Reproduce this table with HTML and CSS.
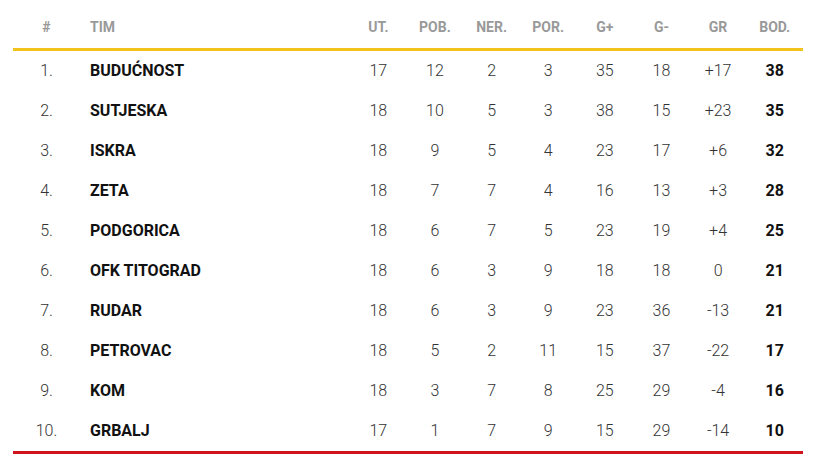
FILE: index.html
```html
<!DOCTYPE html>
<html>
<head>
<meta charset="utf-8">
<link rel="stylesheet" href="styles.css">
</head>
<body>
<div class="table">
  <div class="row head">
    <div class="c pos">#</div><div class="c team">TIM</div>
    <div class="c">UT.</div><div class="c">POB.</div><div class="c">NER.</div><div class="c">POR.</div>
    <div class="c">G+</div><div class="c">G-</div><div class="c">GR</div><div class="c">BOD.</div>
  </div>
  <div class="body">
    <div class="row"><div class="c pos">1.</div><div class="c team">BUDUĆNOST</div><div class="c">17</div><div class="c">12</div><div class="c">2</div><div class="c">3</div><div class="c">35</div><div class="c">18</div><div class="c">+17</div><div class="c pts">38</div></div>
    <div class="row"><div class="c pos">2.</div><div class="c team">SUTJESKA</div><div class="c">18</div><div class="c">10</div><div class="c">5</div><div class="c">3</div><div class="c">38</div><div class="c">15</div><div class="c">+23</div><div class="c pts">35</div></div>
    <div class="row"><div class="c pos">3.</div><div class="c team">ISKRA</div><div class="c">18</div><div class="c">9</div><div class="c">5</div><div class="c">4</div><div class="c">23</div><div class="c">17</div><div class="c">+6</div><div class="c pts">32</div></div>
    <div class="row"><div class="c pos">4.</div><div class="c team">ZETA</div><div class="c">18</div><div class="c">7</div><div class="c">7</div><div class="c">4</div><div class="c">16</div><div class="c">13</div><div class="c">+3</div><div class="c pts">28</div></div>
    <div class="row"><div class="c pos">5.</div><div class="c team">PODGORICA</div><div class="c">18</div><div class="c">6</div><div class="c">7</div><div class="c">5</div><div class="c">23</div><div class="c">19</div><div class="c">+4</div><div class="c pts">25</div></div>
    <div class="row"><div class="c pos">6.</div><div class="c team">OFK TITOGRAD</div><div class="c">18</div><div class="c">6</div><div class="c">3</div><div class="c">9</div><div class="c">18</div><div class="c">18</div><div class="c">0</div><div class="c pts">21</div></div>
    <div class="row"><div class="c pos">7.</div><div class="c team">RUDAR</div><div class="c">18</div><div class="c">6</div><div class="c">3</div><div class="c">9</div><div class="c">23</div><div class="c">36</div><div class="c">-13</div><div class="c pts">21</div></div>
    <div class="row"><div class="c pos">8.</div><div class="c team">PETROVAC</div><div class="c">18</div><div class="c">5</div><div class="c">2</div><div class="c">11</div><div class="c">15</div><div class="c">37</div><div class="c">-22</div><div class="c pts">17</div></div>
    <div class="row"><div class="c pos">9.</div><div class="c team">KOM</div><div class="c">18</div><div class="c">3</div><div class="c">7</div><div class="c">8</div><div class="c">25</div><div class="c">29</div><div class="c">-4</div><div class="c pts">16</div></div>
    <div class="row"><div class="c pos">10.</div><div class="c team">GRBALJ</div><div class="c">17</div><div class="c">1</div><div class="c">7</div><div class="c">9</div><div class="c">15</div><div class="c">29</div><div class="c">-14</div><div class="c pts">10</div></div>
  </div>
</div>
</body>
</html>
```
FILE: styles.css
```css
html, body {
  margin: 0;
  padding: 0;
  background: #fff;
}
body {
  font-family: Roboto, "Liberation Sans", sans-serif;
  padding-top: 8px;
}
.table {
  width: 790px;
  margin-left: 13px;
  border-bottom: 3px solid #d0121b;
}
.row {
  display: grid;
  grid-template-columns: 67px 270px repeat(8, 1fr);
  box-sizing: border-box;
  height: 40px;
  padding-bottom: 2px;
  align-items: center;
}
.head {
  border-bottom: 3px solid #f3c21c;
  height: 43px;
  font-size: 14px;
  font-weight: 700;
  color: #999;
}
.c {
  text-align: center;
}
.team {
  text-align: left;
  padding-left: 10px;
}
.body .row {
  font-size: 16px;
  font-weight: 300;
  color: #333;
}
.body .team {
  font-weight: 700;
  color: #111;
}
.body .pts {
  font-weight: 700;
  color: #111;
}
```
